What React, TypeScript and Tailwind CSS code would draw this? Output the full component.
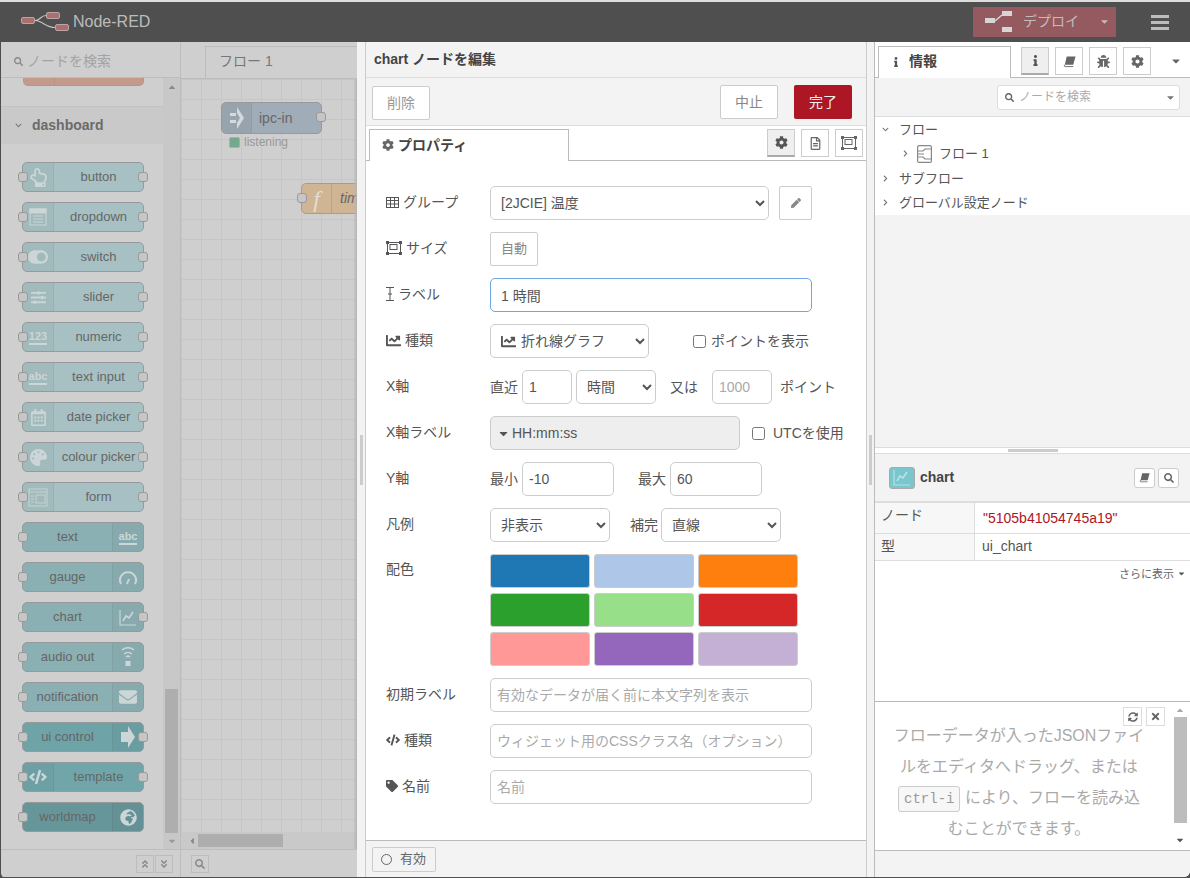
import type { ReactNode } from "react";
import {
  FaBug,
  FaCaretDown,
  FaCaretLeft,
  FaCaretUp,
  FaChartLine,
  FaChevronDown,
  FaChevronRight,
  FaCode,
  FaCog,
  FaEnvelope,
  FaGlobeAfrica,
  FaInfo,
  FaPalette,
  FaPen,
  FaRegCalendarAlt,
  FaRegFileAlt,
  FaRegHandPointUp,
  FaSearch,
  FaSlidersH,
  FaSyncAlt,
  FaTag,
  FaTimes,
  FaToggleOn,
  FaAngleDoubleDown,
  FaAngleDoubleUp,
} from "react-icons/fa";

const ListIcon = () => (
  <svg width="18" height="18" viewBox="0 0 18 18" fill="none" stroke="#ccd6d7" strokeWidth="1">
    <rect x="1" y="1" width="16" height="16" />
    <rect x="1" y="1" width="16" height="4" fill="#ccd6d7" />
    <path d="M4 8h10M4 11h10M4 14h10" />
  </svg>
);

const FormIcon = () => (
  <svg width="20" height="19" viewBox="0 0 20 19" fill="none" stroke="#c6d2d3" strokeWidth="1">
    <rect x="1" y="1" width="18" height="17" />
    <path d="M1 4h18" />
    <rect x="8" y="7" width="9" height="8" />
    <path d="M3 8h3M3 11h3M3 14h3" />
  </svg>
);

const GaugeIcon = () => (
  <svg width="20" height="16" viewBox="0 0 20 16" fill="none" stroke="#ccd6d7" strokeWidth="2">
    <path d="M3 15A8 8 0 1 1 17 15" />
    <path d="M9 15l2-5" />
  </svg>
);

const ChartIcon = ({ color = "#ccd6d7" }: { color?: string }) => (
  <svg width="18" height="17" viewBox="0 0 18 17" fill="none" stroke={color} strokeWidth="1.2">
    <path d="M1 1v15h16" />
    <path d="M4 12l3-5 3 2 4-6" strokeWidth="1.6" />
  </svg>
);

const AudioIcon = () => (
  <svg width="16" height="20" viewBox="0 0 16 20" fill="none" stroke="#ccd6d7" strokeWidth="1.5">
    <path d="M2 3a9 9 0 0 1 12 0M4 7a6 6 0 0 1 8 0M6 10a3 3 0 0 1 4 0" />
    <rect x="5.5" y="14" width="5" height="5" fill="#ccd6d7" stroke="none" />
  </svg>
);

const ArrowIcon = () => (
  <svg width="14" height="22" viewBox="0 0 14 22" fill="#ccd6d7">
    <path d="M0 6h7V0l7 11-7 11v-6H0z" />
  </svg>
);

const SizeIcon = ({ color = "#555" }: { color?: string }) => (
  <svg width="16" height="14" viewBox="0 0 16 14" fill="none" stroke={color} strokeWidth="1">
    <rect x="1.5" y="1.5" width="13" height="11" />
    <rect x="4" y="3.5" width="7" height="5" />
    <rect x="0" y="0" width="3" height="3" fill={color} stroke="none" />
    <rect x="13" y="0" width="3" height="3" fill={color} stroke="none" />
    <rect x="0" y="11" width="3" height="3" fill={color} stroke="none" />
    <rect x="13" y="11" width="3" height="3" fill={color} stroke="none" />
  </svg>
);

const GridIcon = () => (
  <svg width="13" height="11" viewBox="0 0 13 11" fill="none" stroke="#555" strokeWidth="1">
    <rect x=".5" y=".5" width="12" height="10" />
    <path d="M.5 3.5h12M.5 7h12M4.5 .5v10M8.5 .5v10" />
  </svg>
);

const CursorIcon = () => (
  <svg width="8" height="14" viewBox="0 0 8 14" fill="none" stroke="#555" strokeWidth="1">
    <path d="M0 .5h8M0 13.5h8M4 .5v13M2 7h4" />
  </svg>
);

const BookIcon = ({ size = 13 }: { size?: number }) => (
  <svg width={size} height={size} viewBox="0 0 14 13" fill="#666">
    <path d="M4 1h9.5L11 10H2z" />
    <path d="M2.5 9.5C1 10.5 1 12 2.5 12H11" fill="none" stroke="#666" strokeWidth="1" />
  </svg>
);

const FlowIcon = () => (
  <svg width="15" height="18" viewBox="0 0 15 18" fill="none" stroke="#888" strokeWidth="1.2">
    <rect x=".6" y=".6" width="13.8" height="16.8" rx="1.5" />
    <path d="M1 6h5l2-2h6M1 12h5l2 2h6M1 9h6" />
  </svg>
);

const DeployIcon = () => (
  <svg width="28" height="26" viewBox="0 0 28 26" fill="#d6d6d6">
    <rect x="0" y="9" width="10" height="5" />
    <rect x="17" y="2" width="10" height="5" />
    <rect x="17" y="18" width="10" height="5" />
    <path d="M10 12l7-6" stroke="#d6d6d6" strokeWidth="1.4" />
  </svg>
);

const Logo = () => (
  <svg width="48" height="20" viewBox="0 0 48 20">
    <g fill="#ad6e70" stroke="#c9b9b9" strokeWidth=".8">
      <rect x=".5" y="5.5" width="13" height="6" rx="1.5" />
      <rect x="25.5" y=".5" width="13" height="6" rx="1.5" />
      <rect x="34.5" y="12.5" width="13" height="6" rx="1.5" />
    </g>
    <path d="M14 8.5C20 8.5 19 3.5 25 3.5M14 8.5C21 8.5 25 15.5 34 15.5" fill="none" stroke="#c4c4c4" strokeWidth="1.2" />
  </svg>
);

type PaletteNode = { label: string; icon: ReactNode; bg: string; right?: boolean; output?: boolean };

const light = "bg-[#a7c0c3]";
const mid = "bg-[#8bb0b4]";
const glyph = "border-b-2 border-[#ccd6d7] text-[11px] font-bold leading-[13px] text-[#ccd6d7]";

const paletteNodes: PaletteNode[] = [
  { label: "button", icon: <FaRegHandPointUp size={19} color="#ccd6d7" />, bg: light, output: true },
  { label: "dropdown", icon: <ListIcon />, bg: light, output: true },
  { label: "switch", icon: <FaToggleOn size={20} color="#ccd6d7" />, bg: light, output: true },
  { label: "slider", icon: <FaSlidersH size={15} color="#ccd6d7" />, bg: light, output: true },
  { label: "numeric", icon: <span className={glyph}>123</span>, bg: light, output: true },
  { label: "text input", icon: <span className={glyph}>abc</span>, bg: light, output: true },
  { label: "date picker", icon: <FaRegCalendarAlt size={17} color="#ccd6d7" />, bg: light, output: true },
  { label: "colour picker", icon: <FaPalette size={17} color="#ccd6d7" />, bg: light, output: true },
  { label: "form", icon: <FormIcon />, bg: light, output: true },
  { label: "text", icon: <span className={glyph}>abc</span>, bg: mid, right: true },
  { label: "gauge", icon: <GaugeIcon />, bg: mid, right: true },
  { label: "chart", icon: <ChartIcon />, bg: mid, right: true, output: true },
  { label: "audio out", icon: <AudioIcon />, bg: mid, right: true },
  { label: "notification", icon: <FaEnvelope size={18} color="#ccd6d7" />, bg: mid, right: true },
  { label: "ui control", icon: <ArrowIcon />, bg: "bg-[#6ea3a8]", right: true, output: true },
  { label: "template", icon: <FaCode size={18} color="#ccd6d7" />, bg: "bg-[#70a6aa]", output: true },
  { label: "worldmap", icon: <FaGlobeAfrica size={17} color="#ccd6d7" />, bg: "bg-[#67969a]", right: true },
];

const Port = ({ side }: { side: "left" | "right" }) => (
  <span
    className={`absolute top-[9px] h-[10px] w-[10px] rounded-[3px] border border-[#999] bg-[#c6c6c6] ${
      side === "left" ? "left-[-5px]" : "right-[-5px]"
    }`}
  />
);

const PaletteItem = ({ node }: { node: PaletteNode }) => (
  <div className={`relative mb-[10px] ml-[21px] flex h-[30px] w-[122px] items-center rounded-[5px] border border-[#999] ${node.bg}`}>
    <Port side="left" />
    {node.output && <Port side="right" />}
    {!node.right && (
      <span className="flex h-full w-[31px] shrink-0 items-center justify-center rounded-l-[4px] border-r border-black/5 bg-black/[0.03]">
        {node.icon}
      </span>
    )}
    <span className="flex-1 whitespace-nowrap text-center text-[13px] text-[#666]">{node.label}</span>
    {node.right && (
      <span className="flex h-full w-[31px] shrink-0 items-center justify-center rounded-r-[4px] border-l border-black/5 bg-black/[0.03]">
        {node.icon}
      </span>
    )}
  </div>
);

const Palette = () => (
  <div className="flex w-[180px] shrink-0 flex-col border-r border-[#bdbdbd] bg-[#cfcfcf]">
    <div className="flex h-[36px] shrink-0 items-center gap-[4px] border-b border-[#bdbdbd] pl-[13px] pt-[3px] text-[14px] text-[#a3a3a3]">
      <FaSearch size={9} color="#8a8a8a" />
      <span>ノードを検索</span>
    </div>
    <div className="flex min-h-0 flex-1">
      <div className="w-[162px] shrink-0 overflow-hidden">
        <div className="ml-[22px] flex h-[8px] w-[121px] rounded-b-[5px] border border-t-0 border-[#a99] bg-[#c49a8a]">
          <span className="w-[31px] border-r border-black/5" />
        </div>
        <div className="mt-[20px] flex h-[38px] items-center gap-[10px] border-t border-[#c2c2c2] bg-[#c9c9c9] pl-[14px]">
          <FaChevronDown size={7} color="#777" />
          <span className="text-[14px] font-bold text-[#6b6b6b]">dashboard</span>
        </div>
        <div className="pt-[18px]">
          {paletteNodes.map((node) => (
            <PaletteItem key={node.label} node={node} />
          ))}
        </div>
      </div>
      <div className="flex w-[17px] flex-col items-center bg-[#c8c8c8] pt-[4px]">
        <FaCaretUp size={10} color="#888" />
        <div className="mt-auto h-[144px] w-[13px] bg-[#aeaeae]" />
        <div className="flex h-[16px] items-center">
          <FaCaretDown size={10} color="#999" />
        </div>
      </div>
    </div>
    <div className="flex h-[28px] shrink-0 items-center justify-end gap-[1px] border-t border-[#bdbdbd] pr-[7px]">
      <span className="flex h-[18px] w-[18px] items-center justify-center border border-[#bdbdbd]">
        <FaAngleDoubleUp size={10} color="#8a8a8a" />
      </span>
      <span className="flex h-[18px] w-[18px] items-center justify-center border border-[#bdbdbd]">
        <FaAngleDoubleDown size={10} color="#8a8a8a" />
      </span>
    </div>
  </div>
);

const Workspace = () => (
  <div className="flex w-[176px] shrink-0 flex-col bg-[#cfcfcf]">
    <div className="flex h-[37px] shrink-0 items-end border-b border-[#bdbdbd] pl-[24px]">
      <div className="flex h-[32px] flex-1 items-center border-l border-t border-[#bdbdbd] pb-[2px] pl-[13px] text-[14px] text-[#777]">
        フロー 1
      </div>
    </div>
    <div className="relative min-h-0 flex-1 overflow-hidden bg-[linear-gradient(to_right,#c6c6c6_1px,transparent_1px),linear-gradient(to_bottom,#c6c6c6_1px,transparent_1px)] bg-[size:20px_20px]">
      <div className="absolute left-[40px] top-[23px] flex h-[32px] w-[101px] items-center rounded-[5px] border border-[#999] bg-[#a0adb8]">
        <span className="flex h-full w-[30px] shrink-0 items-center justify-center rounded-l-[4px] border-r border-[#909ca6] bg-black/5">
          <svg width="14" height="22" viewBox="0 0 14 22" fill="#d5d9dc">
            <path d="M0 6h6v3H0zM0 13h6v3H0zM7 0l7 11-7 11v-6l3-5-3-5z" />
          </svg>
        </span>
        <span className="pl-[7px] text-[14px] text-[#666]">ipc-in</span>
        <Port side="right" />
      </div>
      <div className="absolute left-[48px] top-[54px] flex items-center gap-[4px]">
        <span className="h-[11px] w-[11px] rounded-[2px] border border-[#8bb] bg-[#75a88f]" />
        <span className="text-[12px] text-[#999]">listening</span>
      </div>
      <div className="absolute left-[120px] top-[104px] flex h-[31px] w-[70px] items-center rounded-[5px] border border-[#a99] bg-[#d0b595]">
        <Port side="left" />
        <span className="flex h-full w-[30px] shrink-0 items-center justify-center border-r border-[#bda385] font-['Liberation_Serif',serif] text-[24px] italic text-[#e0dcd6]">
          f
        </span>
        <span className="pl-[8px] text-[14px] italic text-[#666]">time</span>
      </div>
      <div className="absolute bottom-0 left-0 right-0 flex h-[17px] items-center bg-[#c9c9c9] pl-[6px]">
        <FaCaretLeft size={10} color="#888" />
        <div className="ml-[1px] h-[13px] w-[85px] bg-[#aeaeae]" />
      </div>
      <div className="absolute bottom-0 right-0 top-0 w-[4px] bg-gradient-to-r from-transparent to-[#b4b4b4]" />
    </div>
    <div className="flex h-[28px] shrink-0 items-center border-t border-[#bdbdbd] pl-[10px]">
      <span className="flex h-[18px] w-[18px] items-center justify-center border border-[#bdbdbd]">
        <FaSearch size={10} color="#8a8a8a" />
      </span>
    </div>
  </div>
);

const Row = ({ icon, label, children, className = "" }: { icon?: ReactNode; label: string; children: ReactNode; className?: string }) => (
  <div className={`mb-3 flex h-[34px] items-center ${className}`}>
    <label className="flex w-[104px] shrink-0 items-center gap-[4px] whitespace-nowrap pb-[2px] text-[14px] text-[#555]">
      {icon}
      {label}
    </label>
    {children}
  </div>
);

const field = "h-[34px] rounded-[5px] border bg-white text-[14px] text-[#555] outline-none placeholder:text-[#aaa]";

const swatches = ["bg-[#1f77b4]", "bg-[#aec7e8]", "bg-[#ff7f0e]", "bg-[#2ca02c]", "bg-[#98df8a]", "bg-[#d62728]", "bg-[#ff9896]", "bg-[#9467bd]", "bg-[#c5b0d5]"];

const IconTab = ({ children, active, size = 28 }: { children: ReactNode; active?: boolean; size?: number }) => (
  <span
    className={`flex items-center justify-center border border-[#ccc] ${active ? "border-b-2 border-b-[#aaa] bg-[#efefef]" : "bg-white"} ${
      size === 28 ? "h-[28px] w-[28px]" : "h-[20px] w-[21px] rounded-[3px]"
    }`}
  >
    {children}
  </span>
);

const Editor = () => (
  <div className="flex w-[517px] shrink-0">
    <div className="flex w-[8px] shrink-0 items-center bg-[#f3f3f3]">
      <div className="ml-[3px] h-[50px] w-[3px] bg-[#ccc]" />
    </div>
    <div className="flex w-[502px] shrink-0 flex-col border-x border-[#ccc] bg-white">
      <div className="flex h-[36px] shrink-0 items-center border-b border-[#ddd] bg-[#f3f3f3] pl-[8px] text-[14px] font-bold text-[#444]">
        chart ノードを編集
      </div>
      <div className="flex h-[48px] shrink-0 items-start justify-between border-b border-[#ddd] bg-[#f3f3f3] pl-[6px] pr-[14px] pt-[7px]">
        <button className="mt-[1px] h-[34px] w-[58px] rounded-[2px] border border-[#ccc] bg-white text-[14px] text-[#999]">削除</button>
        <div className="flex gap-[16px]">
          <button className="h-[34px] w-[58px] rounded-[2px] border border-[#ccc] bg-white text-[14px] text-[#888]">中止</button>
          <button className="h-[34px] w-[58px] rounded-[2px] bg-[#ad1625] text-[14px] text-[#eee]">完了</button>
        </div>
      </div>
      <div className="flex h-[35px] shrink-0 items-end justify-between border-b border-[#bbb] bg-white pl-[3px] pr-[3px]">
        <div className="mb-[-1px] flex h-[32px] w-[200px] items-center gap-[4px] border border-b-0 border-[#bbb] bg-white pb-[1px] pl-[12px] text-[14px] font-bold text-[#444]">
          <FaCog size={12} color="#666" />
          プロパティ
        </div>
        <div className="mb-[3px] flex gap-[6px]">
          <IconTab active>
            <FaCog size={13} color="#555" />
          </IconTab>
          <IconTab>
            <FaRegFileAlt size={13} color="#666" />
          </IconTab>
          <IconTab>
            <SizeIcon color="#666" />
          </IconTab>
        </div>
      </div>
      <div className="min-h-0 flex-1 pl-[20px] pt-[25px]">
        <Row label="グループ" icon={<GridIcon />}>
          <select defaultValue="a" className={`${field} w-[279px] border-[#ccc] px-[6px]`}>
            <option value="a">[2JCIE] 温度</option>
          </select>
          <button className="ml-[10px] flex h-[34px] w-[33px] items-center justify-center rounded-[2px] border border-[#ccc] bg-white">
            <FaPen size={10} color="#888" />
          </button>
        </Row>
        <Row label="サイズ" icon={<SizeIcon />}>
          <button className="h-[34px] w-[48px] rounded-[2px] border border-[#ccc] bg-white text-[13px] text-[#888]">自動</button>
        </Row>
        <Row label="ラベル" icon={<CursorIcon />}>
          <input defaultValue="1 時間" className={`${field} w-[322px] border-[#6fa5e0] px-[10px]`} />
        </Row>
        <Row label="種類" icon={<FaChartLine size={15} color="#555" />}>
          <div className="relative">
            <select defaultValue="a" className={`${field} w-[159px] border-[#ccc] pl-[26px] pr-[6px]`}>
              <option value="a">折れ線グラフ</option>
            </select>
            <span className="pointer-events-none absolute left-[11px] top-[10px]">
              <FaChartLine size={15} color="#555" />
            </span>
          </div>
          <label className="ml-[44px] flex items-center gap-[5px] whitespace-nowrap text-[14px] text-[#555]">
            <input type="checkbox" className="h-[13px] w-[13px]" />
            ポイントを表示
          </label>
        </Row>
        <Row label="X軸">
          <span className="w-[32px] whitespace-nowrap text-[14px] text-[#555]">直近</span>
          <input defaultValue="1" className={`${field} w-[50px] border-[#ccc] px-[6px]`} />
          <select defaultValue="a" className={`${field} ml-[4px] w-[80px] border-[#ccc] px-[6px]`}>
            <option value="a">時間</option>
          </select>
          <span className="ml-[14px] w-[42px] whitespace-nowrap text-[14px] text-[#555]">又は</span>
          <input placeholder="1000" className={`${field} w-[60px] border-[#ccc] px-[6px]`} />
          <span className="ml-[8px] whitespace-nowrap text-[14px] text-[#555]">ポイント</span>
        </Row>
        <Row label="X軸ラベル">
          <div className="flex h-[34px] w-[250px] items-center gap-[2px] rounded-[5px] border border-[#ccc] bg-[#eee] pl-[6px] text-[14px] text-[#555]">
            <FaCaretDown size={13} color="#555" />
            HH:mm:ss
          </div>
          <label className="ml-[12px] flex items-center gap-[8px] whitespace-nowrap text-[14px] text-[#555]">
            <input type="checkbox" className="h-[13px] w-[13px]" />
            UTCを使用
          </label>
        </Row>
        <Row label="Y軸">
          <span className="w-[32px] whitespace-nowrap text-[14px] text-[#555]">最小</span>
          <input defaultValue="-10" className={`${field} w-[92px] border-[#ccc] px-[6px]`} />
          <span className="ml-[24px] w-[32px] whitespace-nowrap text-[14px] text-[#555]">最大</span>
          <input defaultValue="60" className={`${field} w-[92px] border-[#ccc] px-[6px]`} />
        </Row>
        <Row label="凡例">
          <select defaultValue="a" className={`${field} w-[120px] border-[#ccc] px-[6px]`}>
            <option value="a">非表示</option>
          </select>
          <span className="ml-[20px] w-[31px] whitespace-nowrap text-[14px] text-[#555]">補完</span>
          <select defaultValue="a" className={`${field} w-[120px] border-[#ccc] px-[6px]`}>
            <option value="a">直線</option>
          </select>
        </Row>
        <div className="mb-3 flex">
          <label className="w-[104px] shrink-0 pt-[5px] text-[14px] leading-[20px] text-[#555]">配色</label>
          <div className="grid grid-cols-[100px_100px_100px] gap-x-[4px] gap-y-[5px]">
            {swatches.map((swatch) => (
              <div key={swatch} className={`h-[34px] rounded-[3px] border border-[#ccc] ${swatch}`} />
            ))}
          </div>
        </div>
        <Row label="初期ラベル">
          <input placeholder="有効なデータが届く前に本文字列を表示" className={`${field} w-[322px] border-[#ccc] px-[6px]`} />
        </Row>
        <Row label="種類" icon={<FaCode size={14} color="#555" />}>
          <input placeholder="ウィジェット用のCSSクラス名（オプション）" className={`${field} w-[322px] border-[#ccc] px-[6px]`} />
        </Row>
        <Row label="名前" icon={<FaTag size={12} color="#555" />}>
          <input placeholder="名前" className={`${field} w-[322px] border-[#ccc] px-[6px]`} />
        </Row>
      </div>
      <div className="flex h-[37px] shrink-0 items-center border-t border-[#bbb] bg-[#f3f3f3] pl-[6px]">
        <button className="flex h-[25px] w-[64px] items-center gap-[8px] rounded-[2px] border border-[#ccc] bg-[#f3f3f3] pl-[8px] text-[13px] text-[#666]">
          <span className="h-[11px] w-[11px] rounded-full border border-[#666]" />
          有効
        </button>
      </div>
    </div>
    <div className="flex w-[7px] shrink-0 items-center bg-[#f3f3f3]">
      <div className="ml-[2px] h-[50px] w-[3px] bg-[#ccc]" />
    </div>
  </div>
);

const TreeRow = ({ open, label, indent }: { open?: boolean; label: string; indent?: boolean }) => (
  <div className={`flex h-[24.5px] items-center text-[13px] text-[#555] ${indent ? "pl-[25px]" : "pl-[5px]"}`}>
    <span className="flex w-[10px] justify-center">
      {open ? <FaChevronDown size={7} color="#777" /> : <FaChevronRight size={7} color="#777" />}
    </span>
    {indent ? (
      <span className="ml-[7px] mr-[7px] flex">
        <FlowIcon />
      </span>
    ) : (
      <span className="w-[9px]" />
    )}
    {label}
  </div>
);

const Sidebar = () => (
  <div className="flex w-[316px] shrink-0 flex-col overflow-hidden rounded-br-[6px] border-l border-[#bbb] bg-white">
    <div className="flex h-[36px] shrink-0 items-end border-b border-[#bbb] pl-[3px]">
      <div className="mb-[-1px] flex h-[32px] w-[133px] items-center border border-b-0 border-[#bbb] bg-white pb-[2px] pl-[12px] text-[14px] font-bold text-[#444]">
        <FaInfo size={10} color="#555" />
        <span className="ml-[8px]">情報</span>
      </div>
      <div className="mb-[2px] ml-[10px] flex items-center gap-[6px]">
        <IconTab active>
          <FaInfo size={11} color="#555" />
        </IconTab>
        <IconTab>
          <BookIcon />
        </IconTab>
        <IconTab>
          <FaBug size={13} color="#666" />
        </IconTab>
        <IconTab>
          <FaCog size={13} color="#666" />
        </IconTab>
        <span className="ml-[13px]">
          <FaCaretDown size={12} color="#666" />
        </span>
      </div>
    </div>
    <div className="flex h-[39px] shrink-0 items-center justify-end border-b border-[#ddd] bg-[#f3f3f3] pr-[10px]">
      <div className="flex h-[25px] w-[183px] items-center rounded-[3px] border border-[#ddd] bg-white pl-[7px] pr-[3px] text-[12px] text-[#aaa]">
        <FaSearch size={9} color="#666" />
        <span className="ml-[5px] flex-1">ノードを検索</span>
        <FaCaretDown size={11} color="#777" />
      </div>
    </div>
    <div className="h-[98px] shrink-0 pt-[0px]">
      <TreeRow open label="フロー" />
      <TreeRow indent label="フロー 1" />
      <TreeRow label="サブフロー" />
      <TreeRow label="グローバル設定ノード" />
    </div>
    <div className="h-[233px] shrink-0 border-b border-[#ddd] bg-[#f3f3f3]" />
    <div className="flex h-[5px] shrink-0 items-center justify-center">
      <div className="h-[3px] w-[50px] bg-[#ccc]" />
    </div>
    <div className="flex h-[48px] shrink-0 items-center border-t border-[#ddd] bg-[#f3f3f3] pl-[14px] pr-[11px]">
      <span className="flex h-[22px] w-[26px] items-center justify-center rounded-[3px] border border-[#aaa] bg-[#79c7cc]">
        <ChartIcon color="#b8e2e5" />
      </span>
      <span className="ml-[5px] flex-1 text-[14px] font-bold text-[#444]">chart</span>
      <div className="flex gap-[3px]">
        <IconTab size={20}>
          <BookIcon size={11} />
        </IconTab>
        <IconTab size={20}>
          <FaSearch size={10} color="#666" />
        </IconTab>
      </div>
    </div>
    <div className="shrink-0 border-t-2 border-[#ddd] text-[14px] text-[#555]">
      <div className="flex h-[31px] border-b border-[#ddd]">
        <div className="w-[100px] border-r border-[#ddd] bg-[#f7f7f7] pl-[6px] pt-[2px]">ノード</div>
        <div className="flex items-center pl-[8px] text-[#ad1625]">"5105b41054745a19"</div>
      </div>
      <div className="flex h-[27px] items-stretch border-b border-[#ddd] pb-0">
        <div className="flex w-[100px] items-center border-r border-[#ddd] bg-[#f7f7f7] pb-[2px] pl-[6px]">型</div>
        <div className="flex items-center pb-[2px] pl-[7px]">ui_chart</div>
      </div>
    </div>
    <div className="flex h-[140px] shrink-0 items-start justify-end gap-[3px] pr-[4px] pt-[5px] text-[11px] text-[#666]">
      さらに表示
      <span className="mt-[3px]">
        <FaCaretDown size={9} color="#555" />
      </span>
    </div>
    <div className="flex h-[150px] shrink-0 border-y border-[#bbb]">
      <div className="relative w-[297px] pr-[9px] pt-[18px] text-center text-[16px] leading-[31px] text-[#aaa]">
        <div className="absolute right-[7px] top-[5px] flex gap-[4px]">
          <span className="flex h-[19px] w-[19px] items-center justify-center border border-[#ddd] bg-white">
            <FaSyncAlt size={10} color="#666" />
          </span>
          <span className="flex h-[19px] w-[19px] items-center justify-center border border-[#ddd] bg-white">
            <FaTimes size={11} color="#666" />
          </span>
        </div>
        <div>フローデータが入ったJSONファイ</div>
        <div>ルをエディタへドラッグ、または</div>
        <div className="h-[31px] whitespace-nowrap">
          <code className="rounded-[3px] border border-[#ccc] bg-[#f7f7f7] px-[5px] py-[4px] font-['Liberation_Mono',monospace] text-[14px] leading-none text-[#999]">ctrl-i</code> により、フローを読み込
        </div>
        <div>むことができます。</div>
      </div>
      <div className="flex w-[16px] flex-col items-center pt-[3px]">
        <FaCaretUp size={10} color="#aaa" />
        <div className="mt-[2px] h-[106px] w-[13px] bg-[#bdbdbd]" />
        <div className="mt-auto pb-[5px]">
          <FaCaretDown size={10} color="#555" />
        </div>
      </div>
    </div>
    <div className="min-h-0 flex-1 bg-[#f3f3f3]" />
  </div>
);

export default function App() {
  return (
    <div className="flex h-[878px] w-[1190px] flex-col overflow-hidden bg-[#4f4f4f] font-['Liberation_Sans','Noto_Sans_CJK_JP',sans-serif]">
      <div className="h-[2px] shrink-0 bg-[#dedede]" />
      <header className="flex h-[40px] shrink-0 items-center pl-[21px] pr-[21px]">
        <Logo />
        <span className="ml-[4px] text-[16px] text-[#bcbcbc]">Node-RED</span>
        <div className="ml-auto flex h-[30px] w-[143px] items-center bg-[#955a5f] pb-[1px] pl-[12px] text-[14px] text-[#c4bcbc]">
          <DeployIcon />
          <span className="ml-[10px]">デプロイ</span>
          <span className="ml-[20px]">
            <FaCaretDown size={11} color="#c4bcbc" />
          </span>
        </div>
        <div className="ml-[35px] flex w-[18px] flex-col gap-[3px]">
          <span className="h-[3px] bg-[#bcbcbc]" />
          <span className="h-[3px] bg-[#bcbcbc]" />
          <span className="h-[3px] bg-[#bcbcbc]" />
        </div>
      </header>
      <div className="ml-[1px] flex min-h-0 flex-1 overflow-hidden rounded-b-[5px] pb-[1px]">
        <Palette />
        <Workspace />
        <Editor />
        <Sidebar />
      </div>
    </div>
  );
}
